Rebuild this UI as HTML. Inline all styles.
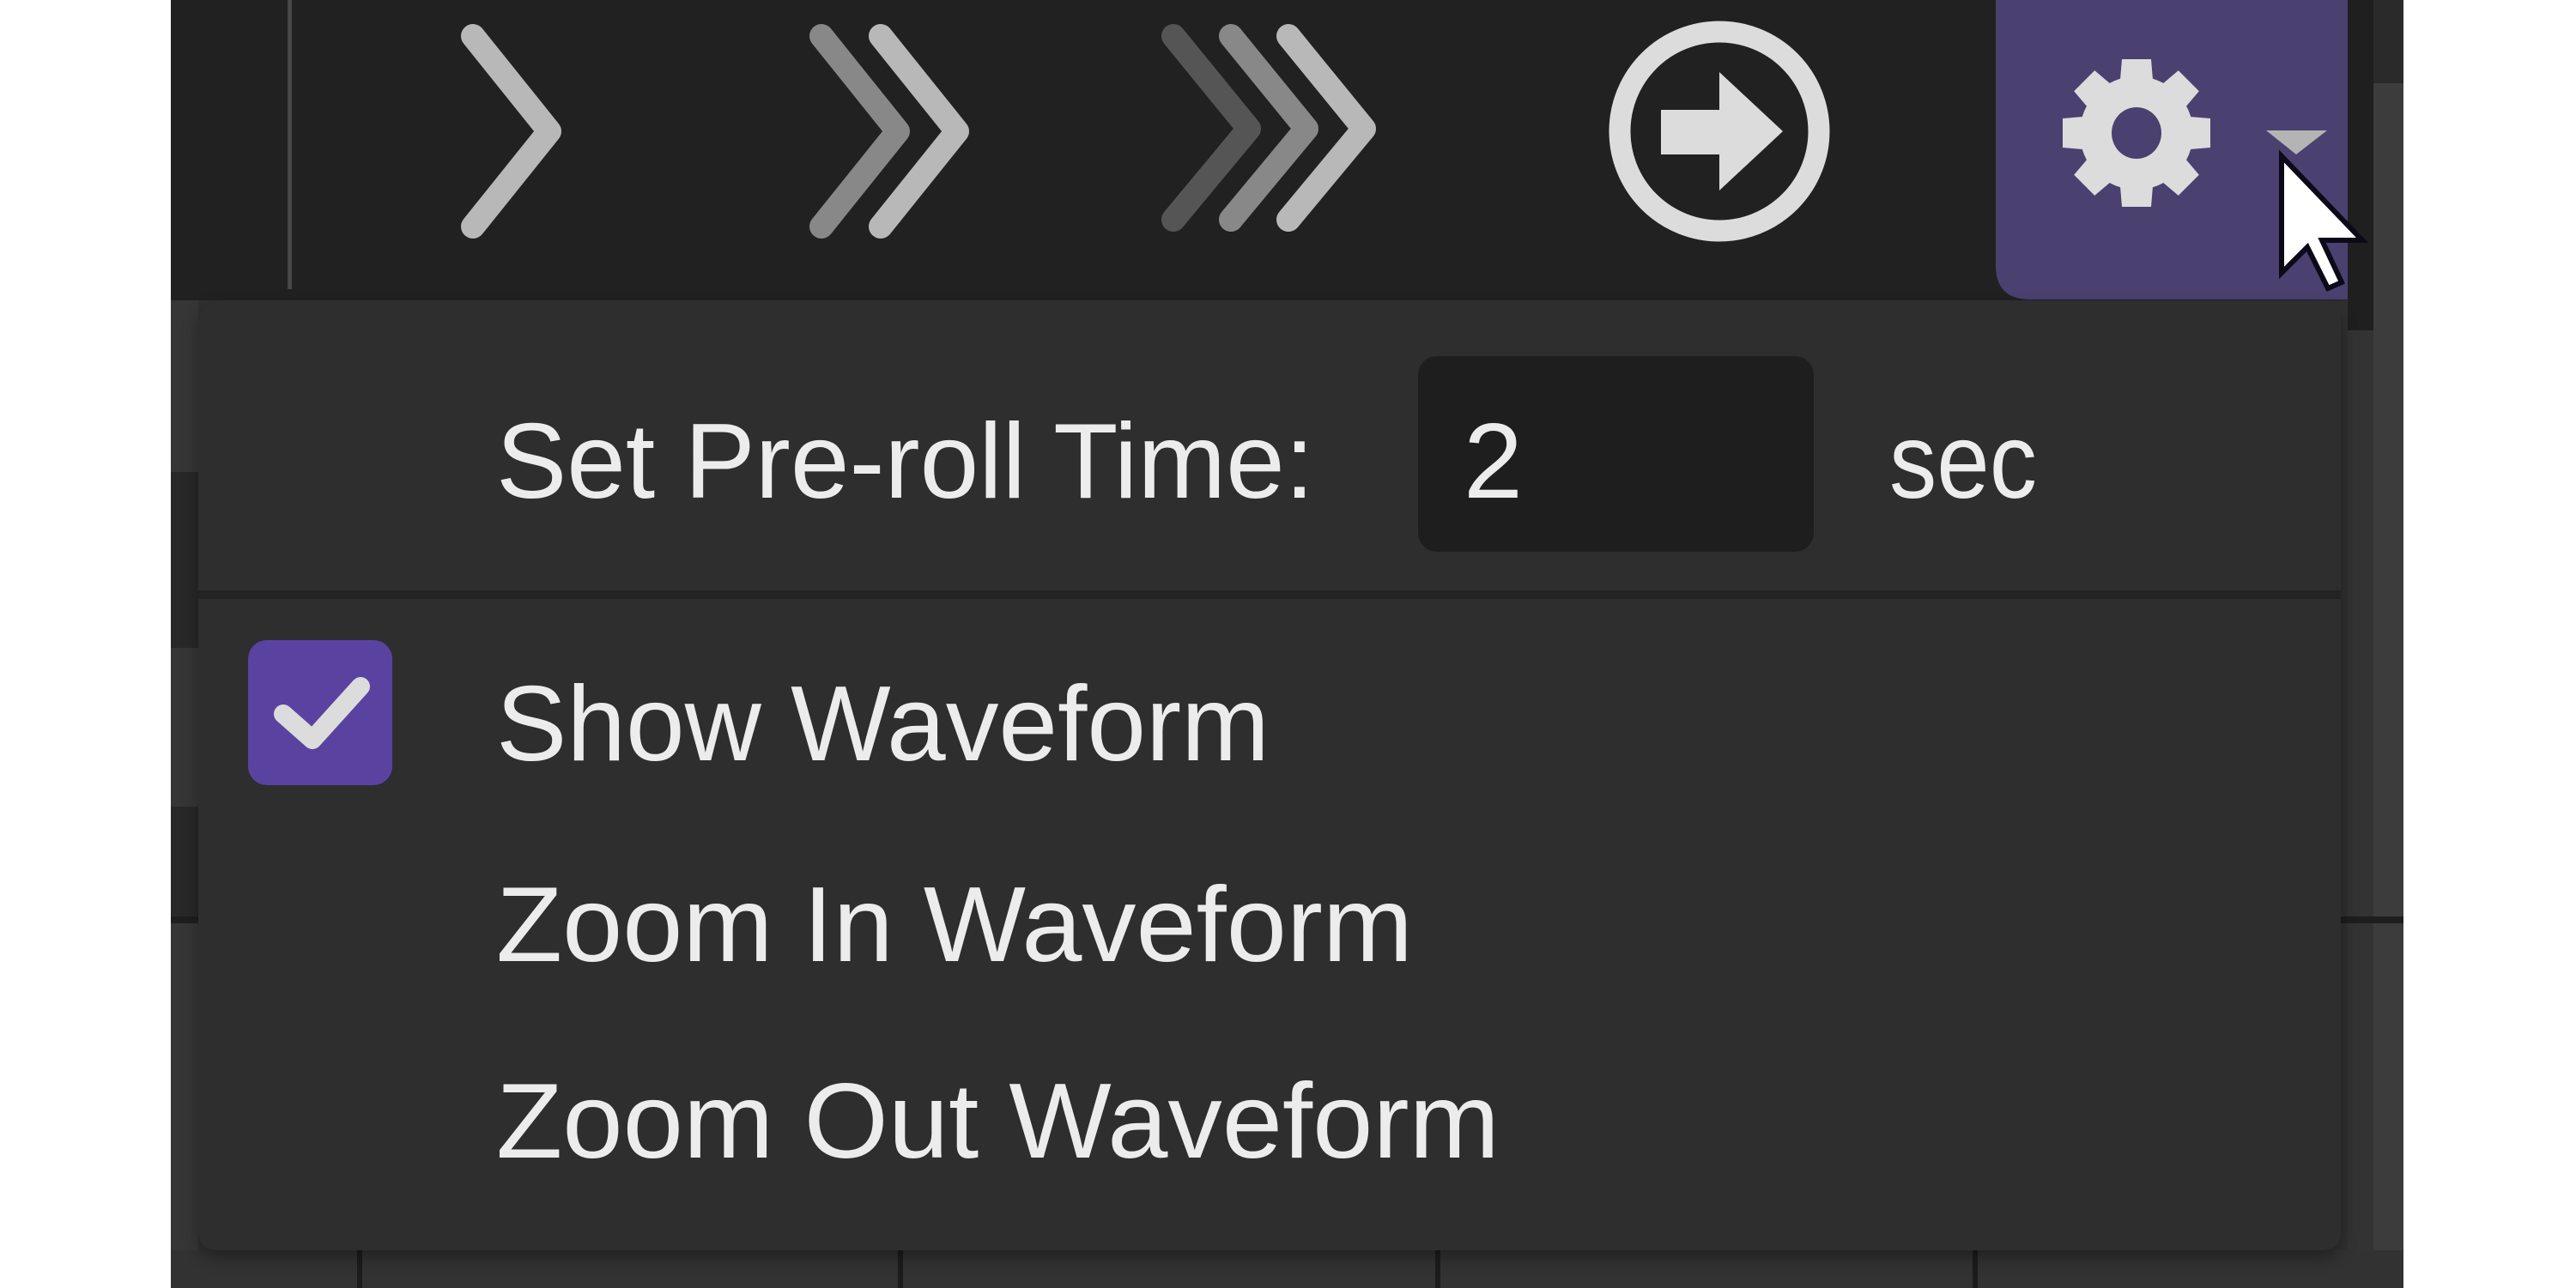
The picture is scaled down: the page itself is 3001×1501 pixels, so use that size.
<!DOCTYPE html>
<html><head><meta charset="utf-8"><style>
html,body{margin:0;padding:0;background:#fff}
svg{display:block}
</style></head><body>
<svg width="3001" height="1501" viewBox="0 0 3001 1501" xmlns="http://www.w3.org/2000/svg">
<defs>
<filter id="sh" x="-5%" y="-5%" width="110%" height="115%"><feGaussianBlur stdDeviation="10"/></filter>
</defs>
<rect x="0" y="0" width="3001" height="1501" fill="#ffffff"/>
<rect x="199" y="0" width="2601" height="1501" fill="#303030"/>
<rect x="199" y="0" width="2601" height="350" fill="#212121"/>
<rect x="199" y="350" width="32" height="1151" fill="#363636"/>
<rect x="199" y="550" width="32" height="205" fill="#282828"/>
<rect x="199" y="940" width="32" height="130" fill="#282828"/>
<rect x="2735" y="0" width="30" height="385" fill="#1f1f1f"/>
<rect x="2765" y="0" width="35" height="97" fill="#2a2a2a"/>
<rect x="2765" y="97" width="35" height="1404" fill="#3c3c3c"/>
<rect x="2735" y="385" width="30" height="1116" fill="#333333"/>
<rect x="2727" y="1068" width="73" height="8" fill="#1e1e1e"/>
<rect x="199" y="1068" width="32" height="8" fill="#1e1e1e"/>
<rect x="199" y="1457" width="2601" height="44" fill="#323232"/>
<rect x="416" y="1455" width="6" height="46" fill="#1c1c1c"/>
<rect x="1046" y="1455" width="6" height="46" fill="#1c1c1c"/>
<rect x="1672" y="1455" width="6" height="46" fill="#1c1c1c"/>
<rect x="2298" y="1455" width="6" height="46" fill="#1c1c1c"/>
<rect x="335" y="0" width="5" height="337" fill="#474747"/>
<g fill="none" stroke-width="28" stroke-linecap="round" stroke-linejoin="round">
<polyline points="551,42 640,153 551,264" stroke="#b8b8b8"/>
<polyline points="957,42 1046,153 957,264" stroke="#888888"/>
<polyline points="1026,42 1115,153 1026,264" stroke="#b8b8b8"/>
<polyline points="1367,42 1455,150 1367,256" stroke="#555555"/>
<polyline points="1434,42 1522,150 1434,256" stroke="#888888"/>
<polyline points="1501,42 1589,150 1501,256" stroke="#b8b8b8"/>
</g>
<circle cx="2003" cy="153" r="116" fill="none" stroke="#dcdcdc" stroke-width="25"/>
<path d="M1935,128 H2003 V84 L2077,153 L2003,222 V180 H1935 Z" fill="#dcdcdc"/>
<path d="M2325,0 H2735 V349 H2365 Q2325,349 2325,309 Z" fill="#4a4170"/>
<g transform="translate(2489,155)" fill="#dcdcdc">
<path d="M-17,-86 H17 L20,-50 H-20 Z"/>
<path d="M-17,-86 H17 L20,-50 H-20 Z" transform="rotate(45)"/>
<path d="M-17,-86 H17 L20,-50 H-20 Z" transform="rotate(90)"/>
<path d="M-17,-86 H17 L20,-50 H-20 Z" transform="rotate(135)"/>
<path d="M-17,-86 H17 L20,-50 H-20 Z" transform="rotate(180)"/>
<path d="M-17,-86 H17 L20,-50 H-20 Z" transform="rotate(225)"/>
<path d="M-17,-86 H17 L20,-50 H-20 Z" transform="rotate(270)"/>
<path d="M-17,-86 H17 L20,-50 H-20 Z" transform="rotate(315)"/>
<circle r="66"/>
<ellipse rx="29" ry="30" fill="#4a4170"/>
</g>
<polygon points="2640,152 2711,152 2675,180" fill="#b4b4b4"/>
<rect x="232" y="360" width="2495" height="1105" rx="22" fill="#000" opacity="0.35" filter="url(#sh)"/>
<path d="M231,350 H2727 V1435 Q2727,1457 2705,1457 H253 Q231,1457 231,1435 V380 Q231,350 261,350 Z" fill="#2e2e2e"/>
<rect x="231" y="688" width="2496" height="10" fill="#232323"/>
<rect x="1652" y="415" width="461" height="228" rx="22" fill="#1e1e1e"/>
<rect x="289" y="746" width="168" height="169" rx="22" fill="#5a43a0"/>
<polyline points="330,832 364,862 420,800" fill="none" stroke="#dcdcdc" stroke-width="22" stroke-linecap="round" stroke-linejoin="round"/>
<g font-family="'Liberation Sans', 'DejaVu Sans', sans-serif" font-size="124" fill="#ececec" lengthAdjust="spacingAndGlyphs">
<text x="578" y="580" textLength="953" lengthAdjust="spacingAndGlyphs">Set Pre-roll Time:</text>
<text x="1705" y="580">2</text>
<text x="2201" y="580" textLength="172" lengthAdjust="spacingAndGlyphs">sec</text>
<text x="578" y="886" textLength="901" lengthAdjust="spacingAndGlyphs">Show Waveform</text>
<text x="578" y="1120" textLength="1068" lengthAdjust="spacingAndGlyphs">Zoom In Waveform</text>
<text x="578" y="1349" textLength="1169" lengthAdjust="spacingAndGlyphs">Zoom Out Waveform</text>
</g>
<polygon points="2658,182 2658,318 2688,288 2712,336 2728,329 2705,280 2752,280" fill="#ffffff" stroke="#0c0a18" stroke-width="6" stroke-linejoin="miter"/>
</svg>
</body></html>
